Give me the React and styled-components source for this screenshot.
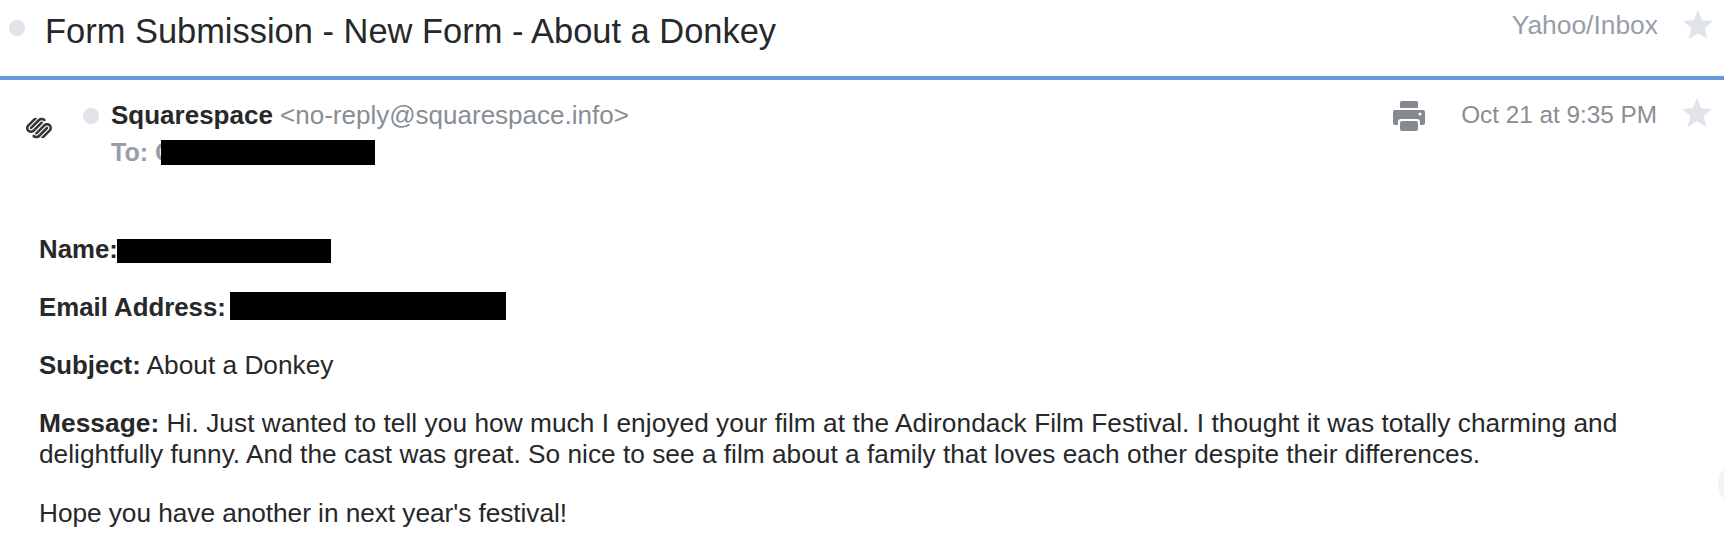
import React from "react";
import styled, { createGlobalStyle } from "styled-components";
import { SiSquarespace } from "react-icons/si";

const GlobalStyle = createGlobalStyle`
html, body {
  margin: 0;
  padding: 0;
  background: #fff;
  overflow: hidden;
}
body {
  font-family: "Liberation Sans", Arial, sans-serif;
  color: #26282a;
}
`

const Page = styled.div`
position: relative;
width: 1724px;
height: 534px;
overflow: hidden;
`

const Header = styled.header`
display: flex;
align-items: flex-start;
height: 76px;
padding: 0 11px 0 9px;
box-sizing: border-box;
box-shadow: inset 0 -3px 3px -3px #e6e6e6;
`

const Dot = styled.span`
flex: none;
width: 16px;
height: 16px;
border-radius: 50%;
background: #e0e4ea;
`

const HeaderDot = styled(Dot)`
margin-top: 20px;
`

const Title = styled.h1`
flex: 1;
margin: 12px 0 0 20px;
font-size: 34.45px;
line-height: 38px;
font-weight: 400;
white-space: nowrap;
`

const Folder = styled.span`
margin: 8px 25px 0 0;
font-size: 26.4px;
line-height: 34px;
color: #979ea8;
`

const Star = styled.svg`
flex: none;
width: 30px;
height: 29px;
margin-top: ${props => props.top}px;
fill: #e0e4ea;
`

const BlueRule = styled.div`
height: 4px;
background: #6a9bd8;
`

const Details = styled.section`
display: flex;
align-items: flex-start;
height: 154px;
padding: 0 12px 0 26px;
box-sizing: border-box;
`

const Logo = styled(SiSquarespace)`
flex: none;
width: 26px;
height: 26px;
margin-top: 35px;
color: #33363a;
`

const SenderDot = styled(Dot)`
margin: 28px 0 0 31px;
`

const Addresses = styled.div`
flex: 1;
margin: 17px 0 0 12px;
line-height: 37px;
`

const Sender = styled.div`
font-size: 26px;
white-space: nowrap;
color: #878e96;
`

const SenderName = styled.strong`
color: #26282a;
`

const Recipient = styled.div`
display: flex;
font-size: 25px;
color: #979ea8;
font-weight: 700;
`

const Redaction = styled.span`
display: inline-block;
width: ${props => props.width}px;
height: ${props => props.height}px;
margin-left: ${props => props.offset || 0}px;
background: #000;
vertical-align: ${props => props.drop}px;
`

const RecipientRedaction = styled(Redaction)`
margin-top: 6px;
`

const PrintIcon = styled.svg`
flex: none;
width: 32px;
height: 30px;
margin: 21px 36px 0 0;
fill: #858a91;
`

const DateText = styled.time`
margin: 20px 25px 0 0;
font-size: 24.3px;
line-height: 30px;
color: #878e96;
`

const Body = styled.main`
padding: 0 39px;
font-size: 26.25px;
line-height: 30.5px;
`

const Paragraph = styled.p`
margin: 0 0 ${props => props.gap || 27.5}px;
`

const Label = styled.strong`
font-size: ${props => props.size || 25.8}px;
`

const Line = styled.span`
display: block;
white-space: nowrap;
letter-spacing: ${props => props.tracking || 0}px;
`

const EdgeShade = styled.div`
position: absolute;
right: -34px;
top: 462px;
width: 40px;
height: 44px;
border-radius: 50%;
background: #f3f3f3;
`

const StarIcon = ({ top }) => (
    <Star top={top} viewBox="0 0 30 29">
        <path d="M15 0l4.2 10.3 10.8.8-8.3 7 2.6 10.9L15 23.2 5.700 29l2.600-10.900-8.300-7 10.800-.8z" />
    </Star>
)

const App = () => {
    return (
        <Page>
            <GlobalStyle />
            <Header>
                <HeaderDot />
                <Title>Form Submission - New Form - About a Donkey</Title>
                <Folder>Yahoo/Inbox</Folder>
                <StarIcon top={10} />
            </Header>
            <BlueRule />
            <Details>
                <Logo />
                <SenderDot />
                <Addresses>
                    <Sender>
                        <SenderName>Squarespace</SenderName> &lt;no-reply@squarespace.info&gt;
                    </Sender>
                    <Recipient>
                        To: C
                        <RecipientRedaction width={214} height={25} offset={-12} />
                    </Recipient>
                </Addresses>
                <PrintIcon viewBox="0 0 32 30">
                    <path d="M7 1.500A1.500 1.500 0 0 1 8.500 0h15A1.500 1.500 0 0 1 25 1.500V7H7zM2 9h28a2 2 0 0 1 2 2v11a2 2 0 0 1-2 2h-3v-3a3 3 0 0 0-3-3H8a3 3 0 0 0-3 3v3H2a2 2 0 0 1-2-2V11a2 2 0 0 1 2-2zm25 2.500a1.500 1.500 0 1 0 0 3 1.500 1.500 0 0 0 0-3zM9 20h14a2 2 0 0 1 2 2v6a2 2 0 0 1-2 2H9a2 2 0 0 1-2-2v-6a2 2 0 0 1 2-2z" fillRule="evenodd" />
                </PrintIcon>
                <DateText>Oct 21 at 9:35 PM</DateText>
                <StarIcon top={18} />
            </Details>
            <Body>
                <Paragraph>
                    <Label>Name:</Label>
                    <Redaction width={214} height={24} offset={-1} drop={-5} />
                </Paragraph>
                <Paragraph>
                    <Label>Email Address:</Label> <Redaction width={276} height={28} offset={-3} drop={-4} />
                </Paragraph>
                <Paragraph>
                    <Label>Subject:</Label> About a Donkey
                </Paragraph>
                <Paragraph gap={28.5}>
                    <Line tracking={0.05}>
                        <Label size={26.3}>Message:</Label> Hi. Just wanted to tell you how much I enjoyed your film at the Adirondack Film Festival. I thought it was totally charming and
                    </Line>
                    <Line tracking={0.015}>delightfully funny. And the cast was great. So nice to see a film about a family that loves each other despite their differences.</Line>
                </Paragraph>
                <Paragraph>
                    <Line tracking={-0.05}>Hope you have another in next year's festival!</Line>
                </Paragraph>
            </Body>
            <EdgeShade />
        </Page>
    )
}

export default App;
